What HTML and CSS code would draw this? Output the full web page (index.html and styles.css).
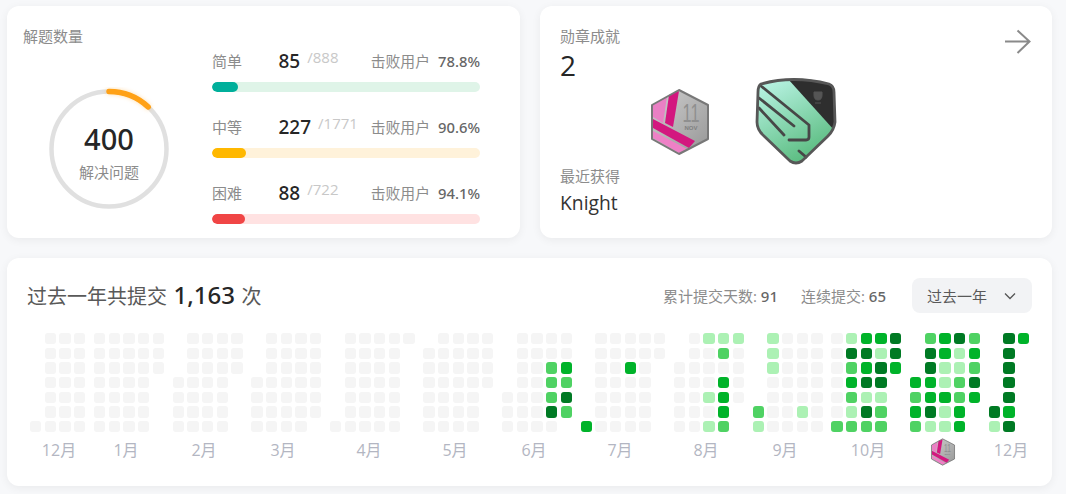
FILE: index.html
```html
<!DOCTYPE html>
<html lang="zh">
<head>
<meta charset="utf-8">
<title>做题统计</title>
<link rel="stylesheet" href="styles.css">
</head>
<body>
<svg class="defs" width="0" height="0" aria-hidden="true">
  <defs>
    <linearGradient id="silver" x1="0" y1="0" x2="1" y2="1"><stop offset="0" stop-color="#cfcfcf"/><stop offset="1" stop-color="#979797"/></linearGradient>
    <linearGradient id="mint" x1="0.15" y1="0" x2="0.65" y2="1"><stop offset="0" stop-color="#b9f3e4"/><stop offset="1" stop-color="#57ba7c"/></linearGradient>
    <symbol id="hex" viewBox="-1 -1 60 68">
      <path d="M28 1 57 16V50L28 65 1 50V16Z" fill="url(#silver)"/>
      <path d="M2 16 16 8 12 34 2 28Z" fill="#ea80c4"/>
      <path d="M18 6 28 2 22 38 14 34Z" fill="#d3177f"/>
      <path d="M2 30 44 52 38 59 2 39Z" fill="#d3177f"/>
      <path d="M2 42 36 60 28 64 2 49Z" fill="#ee80c6"/>
      <path d="M28 1 57 16V50L28 65 1 50V16Z" fill="none" stroke="#787878" stroke-width="2" stroke-linejoin="round"/>
      <text class="hex-day" transform="translate(40 33) scale(.65 1)" text-anchor="middle">11</text>
      <text class="hex-mon" x="40" y="41" text-anchor="middle">NOV</text>
    </symbol>
  </defs>
</svg>

<main class="page">
  <section class="top">
    <article class="card solved">
      <div class="solved-left">
        <h2 class="label">解题数量</h2>
        <div class="ring">
          <svg class="ring-svg" width="124" height="124" viewBox="0 0 124 124" aria-hidden="true">
            <circle class="ring-track" cx="62" cy="62" r="57.500"/>
            <circle class="ring-arc" cx="62" cy="62" r="57.500" transform="rotate(-90 62 62)"/>
          </svg>
          <div class="ring-text">
            <div class="ring-num">400</div>
            <div class="ring-cap">解决问题</div>
          </div>
        </div>
      </div>
      <div class="levels">
        <div class="level">
          <div class="level-head">
            <span class="level-name">简单</span>
            <span class="level-num">85</span><span class="level-total">/888</span>
            <span class="beat">击败用户</span><span class="beat-pct">78.8%</span>
          </div>
          <div class="track track-easy"><div class="fill fill-easy"></div></div>
        </div>
        <div class="level">
          <div class="level-head">
            <span class="level-name">中等</span>
            <span class="level-num">227</span><span class="level-total">/1771</span>
            <span class="beat">击败用户</span><span class="beat-pct">90.6%</span>
          </div>
          <div class="track track-mid"><div class="fill fill-mid"></div></div>
        </div>
        <div class="level">
          <div class="level-head">
            <span class="level-name">困难</span>
            <span class="level-num">88</span><span class="level-total">/722</span>
            <span class="beat">击败用户</span><span class="beat-pct">94.1%</span>
          </div>
          <div class="track track-hard"><div class="fill fill-hard"></div></div>
        </div>
      </div>
    </article>

    <article class="card medals">
      <div class="medal-text">
        <div>
          <h2 class="label">勋章成就</h2>
          <div class="medal-count">2</div>
        </div>
        <div>
          <div class="label">最近获得</div>
          <div class="medal-name">Knight</div>
        </div>
      </div>
      <div class="medal-pics">
        <svg class="pic-hex" width="60" height="68" aria-hidden="true"><use href="#hex"/></svg>
        <svg class="pic-shield" width="82" height="88" viewBox="-1 -1 82 88" aria-hidden="true">
          <path d="M5 6Q37-3 73 6 78 8 78 14L79 44Q78 52 72 58L46 83Q40 87 34 83L8 58Q1 52 1 44L2 14Q2 8 5 6Z" fill="url(#mint)"/>
          <path d="M32 1Q55 0 73 6 78 8 78 14L78 52Z" fill="#2e2e2e"/>
          <path d="M58 14h8v3q0 5-4 5t-4-5ZM59 25h6" fill="#555" stroke="#555" stroke-width="1"/>
          <path d="M5 8 53 47V59Q53 62 50 62H33M3 20 38 48M3 30 28 57M43 73 50 79" fill="none" stroke="#474747" stroke-width="2.800" stroke-linecap="round" stroke-linejoin="round"/>
          <path d="M5 6Q37-3 73 6 78 8 78 14L79 44Q78 52 72 58L46 83Q40 87 34 83L8 58Q1 52 1 44L2 14Q2 8 5 6Z" fill="none" stroke="#575757" stroke-width="2.800"/>
        </svg>
      </div>
      <svg class="arrow" width="27" height="26" viewBox="0 0 27 26" aria-hidden="true">
        <path d="M1 12.500H25M13.500 1.500 25.500 12.500 13.500 24" fill="none" stroke="#8a8a8a" stroke-width="2"/>
      </svg>
    </article>
  </section>

  <section class="card yearly">
    <header class="yearly-head">
      <div class="yearly-title">过去一年共提交<span class="yearly-num">1,163</span>次</div>
      <div class="yearly-stats">
        <span class="stat">累计提交天数: <b class="stat-num">91</b></span>
        <span class="stat">连续提交: <b class="stat-num">65</b></span>
        <div class="select">过去一年
          <svg class="chev" width="12" height="8" viewBox="0 0 12 8" aria-hidden="true"><path d="M1 1.500 6 6.500 11 1.500" fill="none" stroke="#555" stroke-width="1.300"/></svg>
        </div>
      </div>
    </header>

    <div class="cal">
      <div class="mon">
        <div class="wk e"><i></i></div>
        <div class="wk"><i></i><i></i><i></i><i></i><i></i><i></i><i></i></div>
        <div class="wk"><i></i><i></i><i></i><i></i><i></i><i></i><i></i></div>
        <div class="wk"><i></i><i></i><i></i><i></i><i></i><i></i><i></i></div>
      </div>
      <div class="mon">
        <div class="wk"><i></i><i></i><i></i><i></i><i></i><i></i><i></i></div>
        <div class="wk"><i></i><i></i><i></i><i></i><i></i><i></i><i></i></div>
        <div class="wk"><i></i><i></i><i></i><i></i><i></i><i></i><i></i></div>
        <div class="wk"><i></i><i></i><i></i><i></i><i></i><i></i><i></i></div>
        <div class="wk"><i></i><i></i><i></i></div>
      </div>
      <div class="mon">
        <div class="wk e"><i></i><i></i><i></i><i></i></div>
        <div class="wk"><i></i><i></i><i></i><i></i><i></i><i></i><i></i></div>
        <div class="wk"><i></i><i></i><i></i><i></i><i></i><i></i><i></i></div>
        <div class="wk"><i></i><i></i><i></i><i></i><i></i><i></i><i></i></div>
        <div class="wk"><i></i><i></i><i></i></div>
      </div>
      <div class="mon">
        <div class="wk e"><i></i><i></i><i></i><i></i></div>
        <div class="wk"><i></i><i></i><i></i><i></i><i></i><i></i><i></i></div>
        <div class="wk"><i></i><i></i><i></i><i></i><i></i><i></i><i></i></div>
        <div class="wk"><i></i><i></i><i></i><i></i><i></i><i></i><i></i></div>
        <div class="wk"><i></i><i></i><i></i><i></i><i></i><i></i></div>
      </div>
      <div class="mon">
        <div class="wk e"><i></i></div>
        <div class="wk"><i></i><i></i><i></i><i></i><i></i><i></i><i></i></div>
        <div class="wk"><i></i><i></i><i></i><i></i><i></i><i></i><i></i></div>
        <div class="wk"><i></i><i></i><i></i><i></i><i></i><i></i><i></i></div>
        <div class="wk"><i></i><i></i><i></i><i></i><i></i><i></i><i></i></div>
        <div class="wk"><i></i></div>
      </div>
      <div class="mon">
        <div class="wk e"><i></i><i></i><i></i><i></i><i></i><i></i></div>
        <div class="wk"><i></i><i></i><i></i><i></i><i></i><i></i><i></i></div>
        <div class="wk"><i></i><i></i><i></i><i></i><i></i><i></i><i></i></div>
        <div class="wk"><i></i><i></i><i></i><i></i><i></i><i></i><i></i></div>
        <div class="wk"><i></i><i></i><i></i><i></i></div>
      </div>
      <div class="mon">
        <div class="wk e"><i></i><i></i><i></i></div>
        <div class="wk"><i></i><i></i><i></i><i></i><i></i><i></i><i></i></div>
        <div class="wk"><i></i><i></i><i></i><i></i><i></i><i></i><i></i></div>
        <div class="wk"><i></i><i></i><i class="m"></i><i class="m"></i><i class="m"></i><i class="d"></i><i></i></div>
        <div class="wk"><i></i><i></i><i class="g"></i><i class="m"></i><i class="d"></i><i class="m"></i></div>
      </div>
      <div class="mon">
        <div class="wk e"><i class="g"></i></div>
        <div class="wk"><i></i><i></i><i></i><i></i><i></i><i></i><i></i></div>
        <div class="wk"><i></i><i></i><i></i><i></i><i></i><i></i><i></i></div>
        <div class="wk"><i></i><i></i><i class="g"></i><i></i><i></i><i></i><i></i></div>
        <div class="wk"><i></i><i></i><i></i><i></i><i></i><i></i><i></i></div>
        <div class="wk"><i></i><i></i></div>
      </div>
      <div class="mon">
        <div class="wk e"><i></i><i></i><i></i><i></i><i></i></div>
        <div class="wk"><i></i><i></i><i></i><i></i><i></i><i></i><i></i></div>
        <div class="wk"><i class="l"></i><i></i><i></i><i></i><i class="l"></i><i></i><i class="l"></i></div>
        <div class="wk"><i class="l"></i><i class="m"></i><i></i><i class="g"></i><i class="g"></i><i class="g"></i><i class="m"></i></div>
        <div class="wk"><i class="l"></i><i></i><i></i><i></i><i></i></div>
      </div>
      <div class="mon">
        <div class="wk e"><i class="m"></i><i class="l"></i></div>
        <div class="wk"><i class="l"></i><i class="l"></i><i class="l"></i><i></i><i></i><i></i><i></i></div>
        <div class="wk"><i></i><i></i><i></i><i></i><i></i><i></i><i></i></div>
        <div class="wk"><i></i><i></i><i></i><i></i><i></i><i class="l"></i><i></i></div>
        <div class="wk"><i></i><i></i><i></i><i></i><i></i><i></i><i></i></div>
      </div>
      <div class="mon">
        <div class="wk"><i></i><i></i><i></i><i></i><i></i><i></i><i class="m"></i></div>
        <div class="wk"><i class="l"></i><i class="d"></i><i class="m"></i><i class="g"></i><i class="m"></i><i class="l"></i><i class="m"></i></div>
        <div class="wk"><i class="g"></i><i class="d"></i><i class="g"></i><i class="d"></i><i class="l"></i><i class="d"></i><i class="m"></i></div>
        <div class="wk"><i class="g"></i><i class="l"></i><i class="d"></i><i class="d"></i><i class="l"></i><i class="m"></i><i class="m"></i></div>
        <div class="wk"><i class="d"></i><i class="d"></i><i class="g"></i></div>
      </div>
      <div class="mon">
        <div class="wk e"><i class="g"></i><i class="m"></i><i class="g"></i><i class="m"></i></div>
        <div class="wk"><i class="m"></i><i class="d"></i><i class="d"></i><i class="g"></i><i class="g"></i><i class="d"></i><i class="l"></i></div>
        <div class="wk"><i class="g"></i><i class="g"></i><i class="l"></i><i class="l"></i><i class="g"></i><i class="l"></i><i class="l"></i></div>
        <div class="wk"><i class="d"></i><i class="l"></i><i class="l"></i><i class="m"></i><i class="m"></i><i class="g"></i><i class="g"></i></div>
        <div class="wk"><i class="m"></i><i class="g"></i><i class="m"></i><i class="d"></i><i class="g"></i></div>
      </div>
      <div class="mon">
        <div class="wk e"><i class="d"></i><i class="l"></i></div>
        <div class="wk"><i class="d"></i><i class="d"></i><i class="d"></i><i class="d"></i><i class="d"></i><i class="g"></i><i class="d"></i></div>
        <div class="wk"><i class="g"></i></div>
      </div>
    </div>

    <div class="axis">
      <span>12月</span><span>1月</span><span>2月</span><span>3月</span><span>4月</span><span>5月</span><span>6月</span><span>7月</span><span>8月</span><span>9月</span><span>10月</span>
      <span class="axis-badge"><svg width="26" height="28" aria-hidden="true"><use href="#hex"/></svg></span>
      <span>12月</span>
    </div>
  </section>
</main>
</body>
</html>
```

FILE: styles.css
```css
* { box-sizing: border-box; }

html, body { margin: 0; padding: 0; }

body {
  background: #f7f8fa;
  color: #262626;
  font-family: "Open Sans", "Noto Sans CJK SC", sans-serif;
  width: 1066px;
  height: 494px;
  overflow: hidden;
}

.defs { position: absolute; }

.page {
  display: flex;
  flex-direction: column;
  gap: 20px;
  padding: 6px 14px 0 7px;
}

.top { display: flex; gap: 20px; }

.card {
  background: #fff;
  border-radius: 12px;
  box-shadow: 0 2px 10px rgba(0, 0, 0, 0.06);
}

.label {
  margin: 0;
  font-size: 15px;
  font-weight: 400;
  line-height: 20px;
  color: #8c8c8c;
}

.hex-day { font-family: "Liberation Sans", sans-serif; font-size: 25px; fill: #8f8f8f; }

.hex-mon { font-family: "Liberation Sans", sans-serif; font-size: 6px; font-weight: 700; fill: #808080; }

/* solved card */
.solved {
  flex: 0 0 513px;
  height: 232px;
  display: flex;
  padding: 20px 40px 0 16px;
}

.solved-left { flex: 0 0 189px; }

.ring {
  position: relative;
  width: 124px;
  height: 124px;
  margin: 41px 0 0 24px;
}

.ring-svg { display: block; }

.ring-track { fill: none; stroke: #e0e0e0; stroke-width: 4.500; }

.ring-arc {
  fill: none;
  stroke: #ffa116;
  stroke-width: 5.500;
  stroke-linecap: round;
  stroke-dasharray: 43 400;
  filter: drop-shadow(0 0 2px rgba(255, 161, 22, 0.35));
}

.ring-text {
  position: absolute;
  inset: 0;
  display: flex;
  flex-direction: column;
  align-items: center;
  justify-content: center;
  padding-top: 4px;
}

.ring-num { font-family: "Noto Sans", sans-serif; font-size: 29px; font-weight: 500; line-height: 38px; }

.ring-cap { font-size: 15px; line-height: 22px; color: #8c8c8c; margin-top: 3px; }

.levels {
  flex: 1;
  display: flex;
  flex-direction: column;
  gap: 20px;
  padding-top: 21.500px;
}

.level { height: 46px; }

.level-head {
  display: flex;
  align-items: center;
  height: 26px;
}

.level-name { width: 66.500px; font-size: 15px; color: #8c8c8c; }

.level-num { font-family: "Noto Sans", sans-serif; font-size: 19px; font-weight: 500; line-height: 26px; }

.level-total {
  margin: -7px 0 0 7px;
  font-size: 15px;
  color: #c8c8c8;
}

.beat { margin-left: auto; font-size: 14.800px; color: #8c8c8c; }

.beat-pct { margin-left: 8px; font-family: "Noto Sans", sans-serif; font-size: 14.800px; font-weight: 500; color: #666; }

.track {
  height: 10px;
  margin-top: 8.500px;
  border-radius: 5px;
  overflow: hidden;
}

.fill { height: 100%; border-radius: 5px; }

.track-easy { background: #dff4e8; }
.track-mid { background: #fff2da; }
.track-hard { background: #ffe2e2; }

.fill-easy { width: 26px; background: #00af9b; }
.fill-mid { width: 34px; background: #ffb800; }
.fill-hard { width: 33px; background: #f04545; }

/* medals card */
.medals {
  flex: 0 0 512px;
  height: 232px;
  display: flex;
  padding: 20px 21px 20px 20px;
}

.medal-text {
  flex: 0 0 90px;
  display: flex;
  flex-direction: column;
  justify-content: space-between;
}

.medal-count { font-size: 28px; line-height: 38px; color: #262626; }

.medal-name { font-size: 19.300px; line-height: 30px; margin-top: 2px; color: #333; }

.medal-pics { display: flex; gap: 45px; padding-top: 51px; height: 150px; align-items: flex-start; }

.pic-hex { margin-top: 11px; }

.arrow { margin-left: auto; margin-top: 3px; }

/* yearly card */
.yearly {
  height: 228px;
  padding: 20px 20px 0 20px;
}

.yearly-head {
  display: flex;
  align-items: center;
  justify-content: space-between;
  height: 35px;
}

.yearly-title { font-size: 20px; line-height: 37px; color: #595959; }

.yearly-num {
  margin: 0 6.500px;
  font-family: "Noto Sans", sans-serif;
  font-size: 24px;
  font-weight: 500;
  color: #262626;
}

.yearly-stats { display: flex; align-items: center; }

.stat { font-size: 15px; color: #8c8c8c; margin-right: 23px; }

.stat:nth-child(2) { margin-right: 26px; }

.stat-num { font-family: "Noto Sans", sans-serif; font-size: 15px; font-weight: 500; color: #666; }

.select {
  display: flex;
  align-items: center;
  justify-content: space-between;
  width: 120px;
  height: 35px;
  padding: 0 16px 0 15px;
  border-radius: 8px;
  background: #f2f3f5;
  font-size: 15px;
  color: #595959;
}

.cal {
  display: flex;
  gap: 8.720px;
  height: 99.330px;
  margin: 20px 0 0 3px;
}

.mon { display: flex; gap: 3.333px; }

.wk {
  display: flex;
  flex-direction: column;
  gap: 3.333px;
  width: 11.333px;
}

.wk.e { justify-content: flex-end; }

.wk i {
  display: block;
  flex: 0 0 11.333px;
  border-radius: 3px;
  background: #f5f5f5;
}

.wk i.l { background: #acf1b4; }
.wk i.m { background: #4fd263; }
.wk i.g { background: #00b32a; }
.wk i.d { background: #007a24; }

.axis {
  display: grid;
  grid-template-columns: 58px 76px 80px 78px 94px 78px 80px 92px 80px 78px 88px 62px 74px;
  margin: 6px 0 0 3px;
  font-size: 16px;
  line-height: 24px;
  height: 24px;
  color: #b3b6c2;
  text-align: center;
}

.axis-badge { display: flex; justify-content: center; align-items: center; }
```
